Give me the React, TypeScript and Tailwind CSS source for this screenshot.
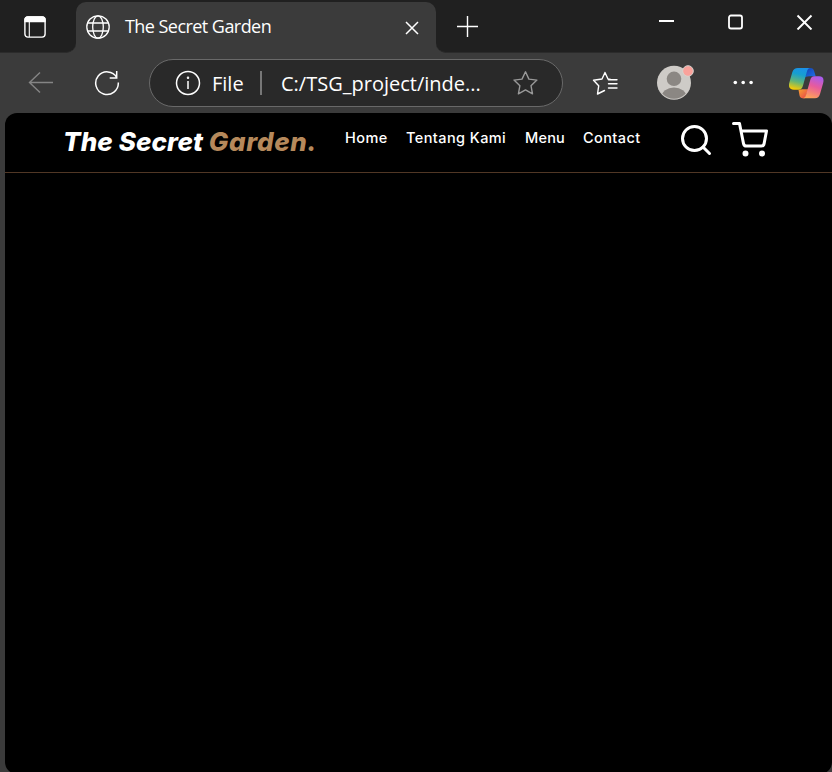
import React from "react";

const uiFont = "font-['Open_Sans','Noto_Sans',sans-serif]";
const siteFont = "font-['Inter','Open_Sans',sans-serif]";

function TabStrip() {
  return (
    <div className="flex h-[53px] shrink-0 bg-[#202020]">
      <div className="flex w-[76px] shrink-0 flex-col bg-[#3b3b3b]">
        <div className="h-[53px] rounded-br-[10px] border-b border-[#2b2b2b] bg-[#202020] pl-[24px] pt-[16px]">
          <svg width="22" height="22" viewBox="0 0 22 22" fill="none" stroke="#fff" strokeWidth="1.4">
            <rect x="0.9" y="0.9" width="20.2" height="20.2" rx="3" />
            <path d="M1 5V3.5A2.5 2.5 0 0 1 3.500 1h15A2.5 2.500 0 0 1 21 3.500V5.500H1z" fill="#fff" />
            <path d="M5.300 5v16" strokeWidth="1.1" />
          </svg>
        </div>
      </div>
      <div className="mt-[2px] flex h-[51px] w-[360px] shrink-0 items-start rounded-t-[10px] bg-[#3b3b3b]">
        <svg className="ml-[10px] mt-[13px]" width="24" height="24" viewBox="0 0 24 24" fill="none" stroke="#fff" strokeWidth="1.3">
          <circle cx="12" cy="12" r="11.2" />
          <ellipse cx="12" cy="12" rx="5.300" ry="11.200" />
          <path d="M1.800 8h20.400M1.800 16h20.400" />
        </svg>
        <span className={`${uiFont} ml-[15px] mt-[10px] w-[160px] whitespace-nowrap text-[18px] leading-[28px] tracking-[-0.55px] text-white`}>
          The Secret Garden
        </span>
        <svg className="ml-auto mr-[17px] mt-[19px]" width="14" height="14" viewBox="0 0 14 14" stroke="#fff" strokeWidth="1.5">
          <path d="M1 1l12 12M13 1L1 13" />
        </svg>
      </div>
      <div className="flex min-w-0 grow bg-[#3b3b3b]">
        <div className="flex grow rounded-bl-[10px] border-b border-[#2b2b2b] bg-[#202020]">
          <svg className="ml-[21px] mt-[16px]" width="22" height="22" viewBox="0 0 22 22" stroke="#fff" strokeWidth="1.4">
            <path d="M10.500 0v21M0 10.500h21" />
          </svg>
          <svg className="ml-auto mt-[14px]" width="154" height="16" viewBox="0 0 154 16" fill="none" stroke="#fff" strokeWidth="2">
            <path d="M0 7h15" />
            <rect x="70" y="1.500" width="13" height="13" rx="2" strokeWidth="1.800" />
            <path d="M138.500 1.500l14 14M152.500 1.500l-14 14" strokeWidth="1.900" />
          </svg>
          <div className="w-[19px]" />
        </div>
      </div>
    </div>
  );
}

function Copilot() {
  return (
    <svg className="ml-[36px] mt-[15px] shrink-0" width="35" height="31" viewBox="0 0 35 31">
      <defs>
        <linearGradient id="cool" x1="0.6" y1="0" x2="0.35" y2="1">
          <stop offset="0" stopColor="#1b91e8" />
          <stop offset=".3" stopColor="#169fd0" />
          <stop offset=".65" stopColor="#63b577" />
          <stop offset="1" stopColor="#f7cb05" />
        </linearGradient>
        <linearGradient id="warm" x1=".7" y1="0" x2=".35" y2="1">
          <stop offset="0" stopColor="#a95cee" />
          <stop offset=".45" stopColor="#e85b9c" />
          <stop offset="1" stopColor="#ffa457" />
        </linearGradient>
        <linearGradient id="blue" x1="0" y1="0" x2="1" y2="1">
          <stop offset="0" stopColor="#123fae" />
          <stop offset="1" stopColor="#2172e8" />
        </linearGradient>
        <linearGradient id="red" x1="0" y1="0" x2="1" y2="1">
          <stop offset="0" stopColor="#f7a331" />
          <stop offset="1" stopColor="#e83e4c" />
        </linearGradient>
      </defs>
      <path d="M18 0h3.500c2 0 3 1 3.600 3l1.600 5.300H22c-2.500 0-4.500 0-6.200 1z" fill="url(#blue)" />
      <path d="M9.500 21.700c1.500 0 2.500-.3 3.500-.5h6.300L16 30.300h-2.500c-1.500 0-2.500-1-3-2.800z" fill="url(#red)" />
      <path d="M9 0H21.500c-2.200 0-3 1.500-3.700 4l-3.800 13.500c-.9 3.200-2 4.300-4.500 4.300H5c-4 0-6-2.500-4.700-7l3-10.500C4.400 1.300 6 0 9 0z" fill="url(#cool)" />
      <path d="M25.500 8.300H30c4 0 5.300 2.500 4.100 7l-3 10.500c-.9 3-2.500 4.500-5.100 4.500H13.500c2 0 3-1.500 3.700-4l3.900-13.700c.8-3 1.900-4.300 4.400-4.300z" fill="url(#warm)" />
    </svg>
  );
}

function Toolbar() {
  return (
    <div className="flex h-[60px] shrink-0 items-start bg-[#3b3b3b]">
      <svg className="ml-[28px] mt-[18px] shrink-0" width="26" height="23" viewBox="0 0 26 23" fill="none" stroke="#858585" strokeWidth="1.4">
        <path d="M25 11.500H1.500M12 1.500L1.500 11.500l10.500 10" />
      </svg>
      <svg className="ml-[40px] mt-[17px] shrink-0" width="26" height="26" viewBox="0 0 26 26" fill="none" stroke="#fff" strokeWidth="1.5">
        <path d="M22.800 7.500A11.300 11.300 0 1 0 24.300 12.500M22.700 1v7h-7" />
      </svg>
      <div className="ml-[29px] mt-[6px] flex h-[48px] w-[414px] shrink-0 items-center rounded-full border-[1.5px] border-[#696969] bg-[#292929]">
        <svg className="ml-[25px] shrink-0" width="26" height="26" viewBox="0 0 26 26" fill="none" stroke="#fff" strokeWidth="1.5">
          <circle cx="13" cy="13" r="11.500" />
          <path d="M13 11v8" />
          <circle cx="13" cy="7.800" r=".5" />
        </svg>
        <span className={`${uiFont} ml-[11px] mt-[2px] w-[48px] whitespace-nowrap text-[20px] leading-[28px] text-white`}>File</span>
        <span className="h-[24px] w-[2px] bg-[#777]" />
        <span className={`${uiFont} ml-[19px] mt-[2px] w-[210px] whitespace-nowrap text-[20px] leading-[28px] text-white`}>
          C:/TSG_project/inde...
        </span>
        <svg className="ml-auto mr-[23px] shrink-0" width="26" height="26" viewBox="0 0 26 26" fill="none" stroke="#999" strokeWidth="1.4" strokeLinejoin="round">
          <path d="M12.500 1.800l3.400 7.300 8 1-5.900 5.600 1.500 8.100-7-3.900-7.100 3.900 1.500-8.100L1 10.100l8-1z" />
        </svg>
      </div>
      <svg className="ml-[29px] mt-[18px] shrink-0" width="26" height="25" viewBox="0 0 26 25" fill="none" stroke="#fff" strokeWidth="1.4" strokeLinejoin="round" strokeLinecap="round">
        <path d="M18.500 8.500L16 8l-3-6.500L10 8l-8.500 1.200 5.200 5.600L5.500 23l7-3.500M16.500 8.700H25M16.500 12.700H25M16.500 17H25" />
      </svg>
      <svg className="ml-[39px] mt-[12px] shrink-0" width="38" height="36" viewBox="0 0 38 36">
        <clipPath id="face"><circle cx="17" cy="17.800" r="16" /></clipPath>
        <circle cx="17" cy="17.800" r="17" fill="#cecbc7" />
        <circle cx="17" cy="13.800" r="7.300" fill="#8b8783" />
        <ellipse cx="17" cy="31.500" rx="12.500" ry="9" fill="#8b8783" clipPath="url(#face)" />
        <circle cx="31" cy="6" r="5.300" fill="#faa29b" stroke="#d8d3cf" />
      </svg>
      <svg className="ml-[38px] mt-[27px] shrink-0" width="20" height="5" viewBox="0 0 20 5" fill="#fff">
        <circle cx="2.300" cy="2.500" r="1.800" />
        <circle cx="10.200" cy="2.500" r="1.800" />
        <circle cx="18.100" cy="2.500" r="1.800" />
      </svg>
      <Copilot />
    </div>
  );
}

function SiteHeader() {
  return (
    <header className={`${siteFont} flex h-[60px] items-start border-b border-[#513725] pl-[58px] text-white`}>
      <a className="mt-[9px] w-[282px] whitespace-nowrap text-[26px] font-extrabold italic leading-[40px] tracking-[0.1px]">
        The Secret <span className="tracking-[0.6px] text-[#b6895b]">Garden.</span>
      </a>
      <nav className="mt-[13px] flex w-[333px] whitespace-nowrap text-[14.5px] font-medium leading-[24px] tracking-[0.42px]">
        <a className="w-[61px]">Home</a>
        <a className="w-[119px]">Tentang Kami</a>
        <a className="w-[58px] tracking-[0.2px]">Menu</a>
        <a>Contact</a>
      </nav>
      <div className="mt-[9px] flex gap-[18px]">
        <svg width="36" height="36" viewBox="0 0 24 24" fill="none" stroke="currentColor" strokeWidth="2" strokeLinecap="round">
          <circle cx="11" cy="11" r="8" />
          <path d="M21 21l-4.350-4.350" />
        </svg>
        <svg width="36" height="36" viewBox="0 0 24 24" fill="none" stroke="currentColor" strokeWidth="2" strokeLinecap="round" strokeLinejoin="round">
          <circle cx="9" cy="21" r="1" />
          <circle cx="20" cy="21" r="1" />
          <path d="M1 1h4l2.680 13.390a2 2 0 0 0 2 1.610h9.720a2 2 0 0 0 2-1.610L23 6H6" />
        </svg>
      </div>
    </header>
  );
}

export default function App() {
  return (
    <div className="flex h-[772px] w-[832px] flex-col overflow-hidden bg-[#3b3b3b]">
      <TabStrip />
      <Toolbar />
      <main className="ml-[5px] h-[661px] shrink-0 rounded-[12px] bg-black">
        <SiteHeader />
      </main>
    </div>
  );
}
